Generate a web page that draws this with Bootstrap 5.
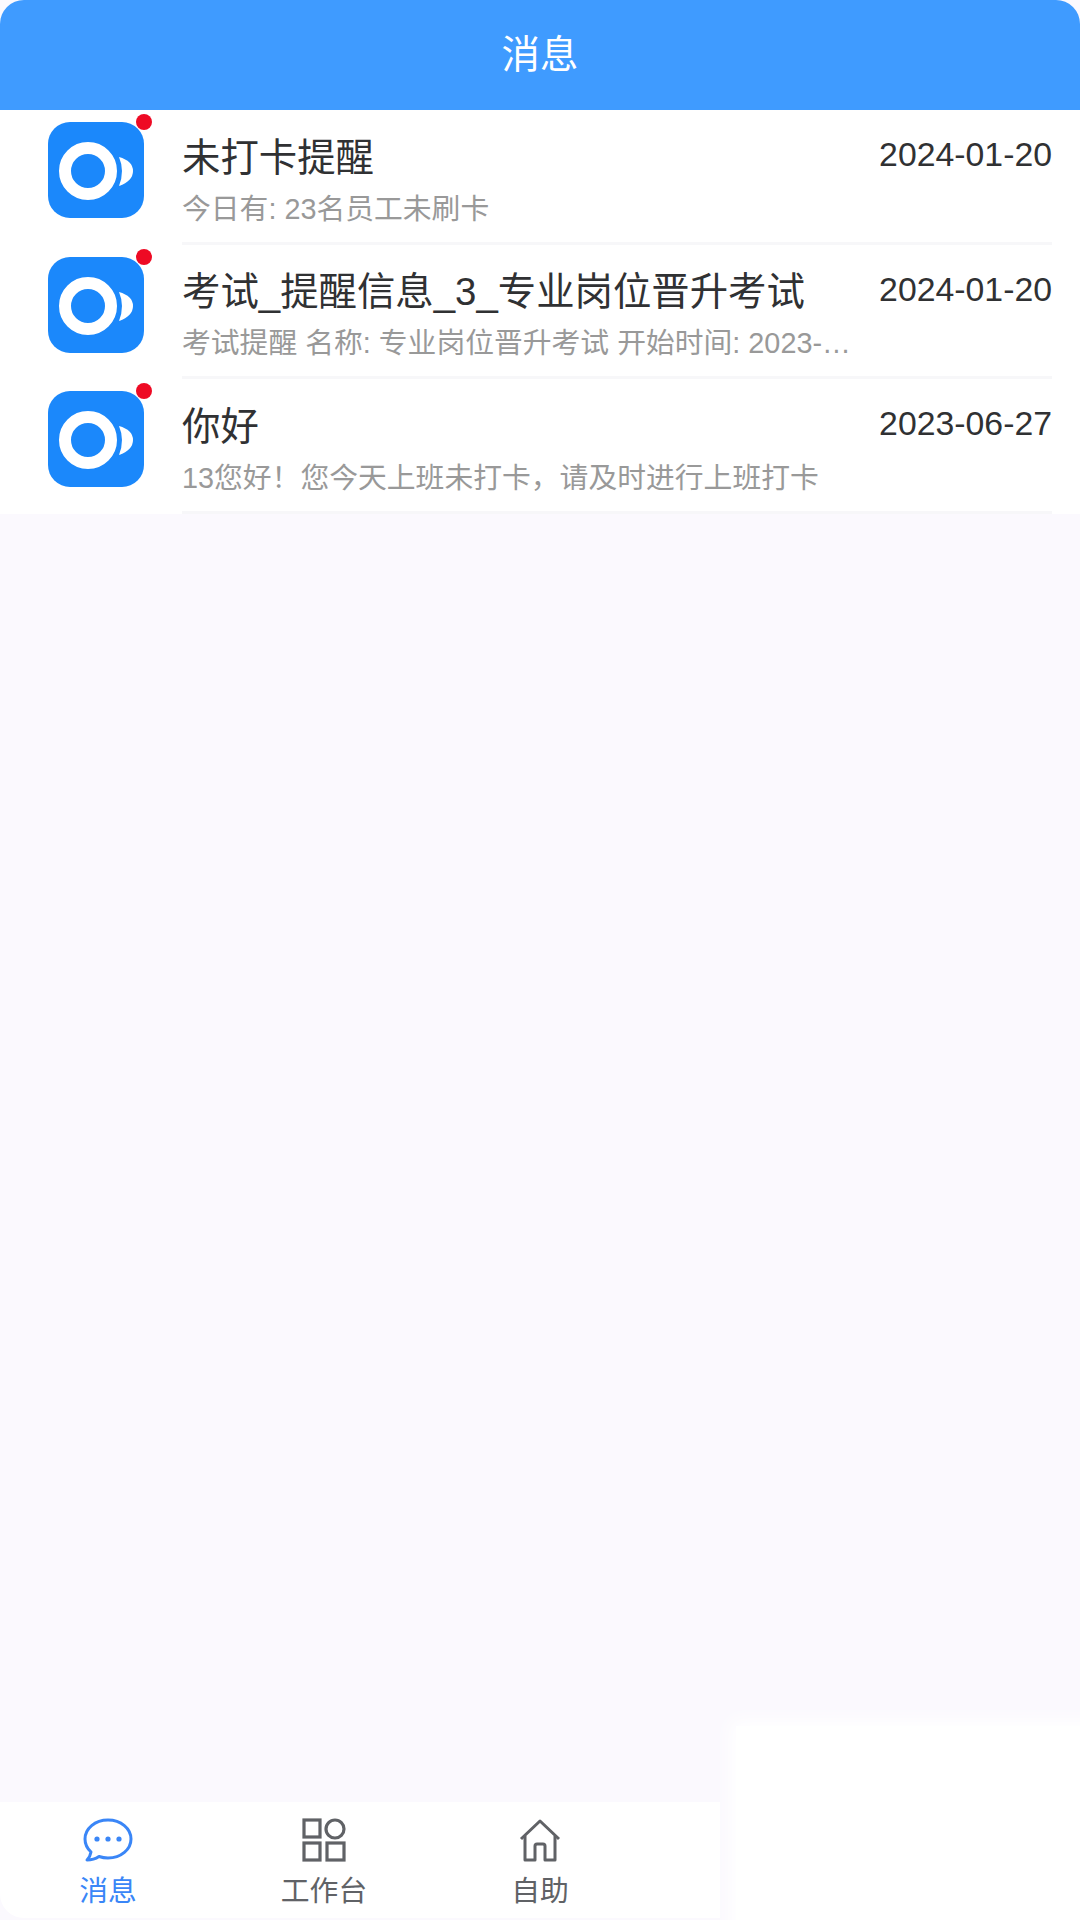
<!DOCTYPE html>
<html lang="zh-CN">
<head>
    <meta charset="UTF-8">
    <meta name="viewport" content="width=device-width, initial-scale=1.0">
    <title>消息</title>
    <link href="https://cdn.jsdelivr.net/npm/bootstrap@5.3.0/dist/css/bootstrap.min.css" rel="stylesheet">
    <style>
        html, body { height: 100%; }
        body {
            background: #fff;
            font-family: "Liberation Sans", "Noto Sans CJK SC", sans-serif;
            color: #303133;
        }
        .app-page { height: 1920px; background: #fbf9fe; overflow: hidden; }
        .app-head {
            height: 110px;
            background: #3f9bff;
            border-radius: 24px 24px 0 0;
            font-size: 38.4px;
            color: #fff;
        }
        .msg-list { background: #fff; height: 404px; }
        .msg-row { height: 134.5px; }
        .msg-thumb { width: 96px; height: 96px; margin: 12px 38px 0 48px; }
        .msg-thumb svg { display: block; }
        .msg-dot {
            position: absolute;
            top: -8px;
            right: -8px;
            width: 16px;
            height: 16px;
            border-radius: 50%;
            background: #ee0a24;
        }
        .msg-body {
            min-width: 0;
            margin-right: 28px;
            border-bottom: 3px solid #f7f7f9;
        }
        .msg-title { font-size: 38.4px; line-height: 48px; padding-top: 23.5px; }
        .msg-date { font-size: 33.8px; line-height: 40px; padding-top: 24.4px; }
        .msg-sub {
            font-size: 28.8px;
            line-height: 36px;
            color: #999;
            max-width: 672px;
            margin-top: 9px;
        }
        .tab-bar { height: 116px; width: 720px; background: #fff; border-radius: 0 0 0 24px; margin-bottom: 2px; }
        .tab-item { width: 216px; font-size: 28.8px; line-height: 34px; color: #606266; }
        .tab-item svg { display: block; margin: 16px auto 12px; }
        .tab-on { color: #3a86f7; }
        .fade-block {
            position: absolute;
            left: 736px;
            right: -20px;
            top: 1726px;
            bottom: -20px;
            background: #fff;
            box-shadow: 0 0 18px 6px #fff;
        }
    </style>
</head>
<body>
    <div class="app-page d-flex flex-column position-relative">
        <div class="app-head d-flex align-items-center justify-content-center flex-shrink-0">消息</div>

        <div class="msg-list flex-shrink-0">
            <div class="msg-row d-flex">
                <div class="msg-thumb position-relative flex-shrink-0">
                    <svg width="96" height="96" viewBox="0 0 96 96"><rect width="96" height="96" rx="22" fill="#1b88fb"/><circle cx="40" cy="49" r="23" fill="none" stroke="#fff" stroke-width="12"/><path d="M71 35Q85 39 85 49Q85 59 71 64Q77 49 71 35Z" fill="#fff"/></svg>
                    <span class="msg-dot"></span>
                </div>
                <div class="msg-body flex-grow-1 d-flex justify-content-between">
                    <div class="overflow-hidden">
                        <div class="msg-title text-truncate">未打卡提醒</div>
                        <div class="msg-sub text-truncate">今日有: 23名员工未刷卡</div>
                    </div>
                    <div class="msg-date flex-shrink-0">2024-01-20</div>
                </div>
            </div>
            <div class="msg-row d-flex">
                <div class="msg-thumb position-relative flex-shrink-0">
                    <svg width="96" height="96" viewBox="0 0 96 96"><rect width="96" height="96" rx="22" fill="#1b88fb"/><circle cx="40" cy="49" r="23" fill="none" stroke="#fff" stroke-width="12"/><path d="M71 35Q85 39 85 49Q85 59 71 64Q77 49 71 35Z" fill="#fff"/></svg>
                    <span class="msg-dot"></span>
                </div>
                <div class="msg-body flex-grow-1 d-flex justify-content-between">
                    <div class="overflow-hidden">
                        <div class="msg-title text-truncate">考试_提醒信息_3_专业岗位晋升考试</div>
                        <div class="msg-sub text-truncate">考试提醒 名称: 专业岗位晋升考试 开始时间: 2023-01-01 08:00:00</div>
                    </div>
                    <div class="msg-date flex-shrink-0">2024-01-20</div>
                </div>
            </div>
            <div class="msg-row d-flex">
                <div class="msg-thumb position-relative flex-shrink-0">
                    <svg width="96" height="96" viewBox="0 0 96 96"><rect width="96" height="96" rx="22" fill="#1b88fb"/><circle cx="40" cy="49" r="23" fill="none" stroke="#fff" stroke-width="12"/><path d="M71 35Q85 39 85 49Q85 59 71 64Q77 49 71 35Z" fill="#fff"/></svg>
                    <span class="msg-dot"></span>
                </div>
                <div class="msg-body flex-grow-1 d-flex justify-content-between">
                    <div class="overflow-hidden">
                        <div class="msg-title text-truncate">你好</div>
                        <div class="msg-sub text-truncate">13您好！您今天上班未打卡，请及时进行上班打卡</div>
                    </div>
                    <div class="msg-date flex-shrink-0">2023-06-27</div>
                </div>
            </div>
        </div>

        <div class="flex-grow-1"></div>

        <div class="fade-block"></div>

        <div class="tab-bar d-flex position-relative flex-shrink-0">
            <div class="tab-item tab-on text-center">
                <svg width="50" height="44" viewBox="0 0 50 44" fill="none" stroke="#3a86f7" stroke-width="3"><path d="M25 2C12 2 2 10.500 2 21C2 26 4.200 30.500 8 34C7.500 37 6 40 4 42C9 42 13 40.500 16 38.500C19 39.500 22 40 25 40C38 40 48 31.500 48 21C48 10.500 38 2 25 2Z" stroke-linejoin="round"/><circle cx="14" cy="21" r="2.600" fill="#3a86f7" stroke="none"/><circle cx="25" cy="21" r="2.600" fill="#3a86f7" stroke="none"/><circle cx="36" cy="21" r="2.600" fill="#3a86f7" stroke="none"/></svg>
                消息
            </div>
            <div class="tab-item text-center">
                <svg width="44" height="44" viewBox="0 0 44 44" fill="none" stroke="#606266" stroke-width="3.200"><rect x="2" y="2" width="16" height="17"/><circle cx="33" cy="11" r="9"/><rect x="2" y="25" width="16" height="17"/><rect x="25" y="25" width="17" height="17"/></svg>
                工作台
            </div>
            <div class="tab-item text-center">
                <svg width="44" height="44" viewBox="0 0 44 44" fill="none" stroke="#606266" stroke-width="3" stroke-linejoin="round"><path d="M3 21L22 3L41 21"/><path d="M7 18V42H17V28Q17 26 19 26H25Q27 26 27 28V42H37V18"/></svg>
                自助
            </div>
        </div>
    </div>
    <script src="https://cdn.jsdelivr.net/npm/bootstrap@5.3.0/dist/js/bootstrap.bundle.min.js"></script>
</body>
</html>
